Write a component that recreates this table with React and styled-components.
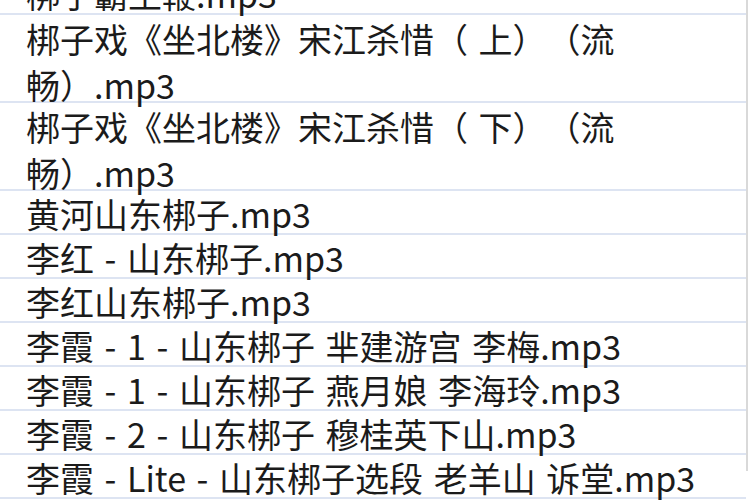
import React from "react";
import styled, { createGlobalStyle } from "styled-components";

const GlobalStyle = createGlobalStyle`
  html, body {
    margin: 0;
    padding: 0;
    background: #ffffff;
  }
  body {
    font-family: "Noto Sans CJK SC", "Noto Sans", sans-serif;
  }
`;

// the visible part of a sheet column, scrolled a little down
const Viewport = styled.div`
  width: 750px;
  height: 500px;
  overflow: hidden;
  background: #ffffff;
`;

const Column = styled.div`
  width: 746px;
  height: 100%;
  border-right: 2px solid #d9d9d9;
  box-sizing: content-box;
`;

const List = styled.ul`
  list-style: none;
  margin: -29px 0 0 0;
  padding: 0;
`;

// a cell; wrapped cells are twice as tall, like the sheet's own rows
const Row = styled.li`
  box-sizing: border-box;
  height: ${(props) => (props.$wrap ? "88px" : "44px")};
  padding: ${(props) => (props.$wrap ? "1px" : "4px")} 0 0 26px;
  border-bottom: 2px solid #dde4f2;
  font-size: 34px;
  line-height: ${(props) => (props.$wrap ? "46px" : "38px")};
  word-spacing: 3px;
  text-spacing-trim: space-all;
  color: #1b1b1b;
  white-space: normal;
`;

const files = [
  { name: "梆子霸王鞭.mp3" },
  { name: "梆子戏《坐北楼》宋江杀惜（ 上）（流畅）.mp3", wrap: true },
  { name: "梆子戏《坐北楼》宋江杀惜（ 下）（流畅）.mp3", wrap: true },
  { name: "黄河山东梆子.mp3" },
  { name: "李红 - 山东梆子.mp3" },
  { name: "李红山东梆子.mp3" },
  { name: "李霞 - 1 - 山东梆子 芈建游宫 李梅.mp3" },
  { name: "李霞 - 1 - 山东梆子 燕月娘 李海玲.mp3" },
  { name: "李霞 - 2 - 山东梆子 穆桂英下山.mp3" },
  { name: "李霞 - Lite - 山东梆子选段 老羊山 诉堂.mp3" },
];

export default function App() {
  return (
    <>
      <GlobalStyle />
      <Viewport>
        <Column>
          <List>
            {files.map((f, i) => (
              <Row key={i} $wrap={f.wrap}>
                {f.name}
              </Row>
            ))}
          </List>
        </Column>
      </Viewport>
    </>
  );
}
